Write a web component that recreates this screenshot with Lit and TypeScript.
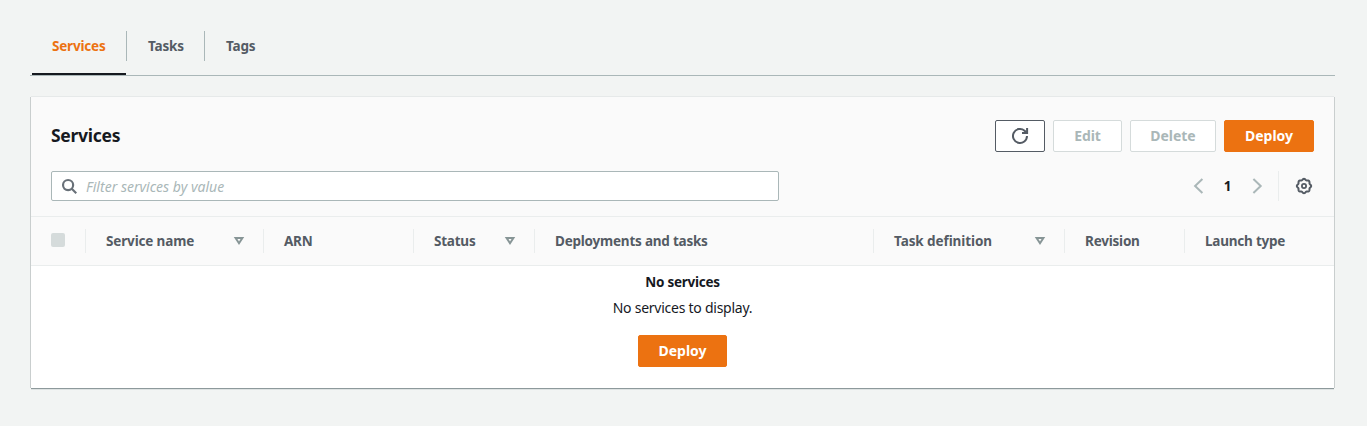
import { LitElement, html, css, svg, nothing } from "lit";
import { customElement } from "lit/decorators.js";

interface Column {
  label: string;
  cls: string;
  sortable?: boolean;
}

const COLUMNS: Column[] = [
  { label: "Service name", cls: "c-name", sortable: true },
  { label: "ARN", cls: "c-arn" },
  { label: "Status", cls: "c-status", sortable: true },
  { label: "Deployments and tasks", cls: "c-deploy" },
  { label: "Task definition", cls: "c-def", sortable: true },
  { label: "Revision", cls: "c-rev" },
  { label: "Launch type", cls: "c-launch" },
];

const gearPath = (() => {
  const pts: string[] = [];
  for (let i = 0; i < 96; i++) {
    const a = (i / 96) * Math.PI * 2;
    const r = 6.6 + 0.55 * Math.cos(a * 8);
    pts.push(`${(8 + r * Math.cos(a)).toFixed(2)} ${(8 + r * Math.sin(a)).toFixed(2)}`);
  }
  return `M${pts.join("L")}Z`;
})();

const icon = (body: unknown) => html`<svg class="icon" viewBox="0 0 16 16" fill="none" stroke="currentColor" stroke-width="2">${body}</svg>`;
const refreshIcon = icon(svg`<path d="M15 8A7 7 0 1 1 12.6 2.7L15 5"/><path d="M15.1 0v5.1h-5.1" />`);
const searchIcon = icon(svg`<circle cx="6.5" cy="6.5" r="5.4" stroke-width="2.3"/><path d="M10.4 10.4L15.2 15.2" stroke-width="2.3"/>`);
const prevIcon = icon(svg`<path d="M12.4 1L5.1 8L12.4 15"/>`);
const nextIcon = icon(svg`<path d="M4.4 1L11.7 8L4.4 15"/>`);
const gearIcon = icon(svg`<path d=${gearPath} stroke-width="2"/><circle cx="8" cy="8" r="2.1" stroke-width="1.8"/>`);
const sortIcon = html`<svg class="sort" viewBox="0 0 10 8" fill="none" stroke="currentColor" stroke-width="2"><path d="M1.6 1H8.4L5 6.2Z"/></svg>`;

@customElement("app-root")
export class AppRoot extends LitElement {
  static styles = css`
    :host {
      display: block;
      box-sizing: border-box;
      height: 426px;
      padding: 16px 32px 0 31px;
      overflow: hidden;
      background: #f2f4f3;
      color: #16191f;
      font: 14px/22px "Noto Sans", "Open Sans", sans-serif;
    }
    * { box-sizing: border-box; }
    .icon { display: block; width: 16px; height: 16px; overflow: visible; flex: none; }
    .tabs {
      display: flex;
      height: 60px;
      margin-left: -1px;
      padding-left: 2px;
      border-bottom: 1px solid #aab7b8;
    }
    .tab {
      display: flex;
      height: 59px;
      padding: 15px 0 14px;
      font-weight: 700;
      font-size: 13.5px;
      color: #545b64;
      white-space: nowrap;
    }
    .tab span { display: block; height: 30px; line-height: 30px; padding-left: 20px; border-right: 1px solid #aab7b8; }
    .tab.active { color: #ec7211; border-bottom: 2px solid #16191f; width: 94px; }
    .tab.active span { width: 95px; flex: none; }
    .tab.tasks span { width: 79px; padding-left: 22px; }
    .tab.tags span { padding-left: 21px; border: 0; }
    .tabs .t { letter-spacing: -0.2px; }
    .panel {
      height: 291px;
      margin-top: 21px;
      width: 1303px;
      background: #fff;
      box-shadow: 0 1px 0 0 #8d999b, -1px 0 0 0 #c9cece, 1px 0 0 0 #c9cece,
        0 -1px 0 0 #e6e9e9, 0 2px 0 0 #dde2e2;
    }
    .head { height: 120px; padding: 23px 20px 0; background: #fafafa; border-bottom: 1px solid #eaeded; }
    .title-row { display: flex; justify-content: space-between; height: 32px; }
    h2 { margin: 0; font-size: 17.5px; line-height: 30px; font-weight: 700; letter-spacing: -0.28px; }
    .actions { display: flex; gap: 8px; }
    .btn {
      display: flex;
      align-items: center;
      justify-content: center;
      height: 32px;
      border: 1px solid #d5dbdb;
      border-radius: 2px;
      background: #fff;
      color: #aab7b8;
      font: 700 14px/20px "Noto Sans", sans-serif;
      letter-spacing: -0.05px;
      padding: 0;
    }
    .refresh { width: 50px; border-color: #545b64; color: #545b64; }
    .edit { width: 69px; }
    .delete { width: 86px; }
    .primary { width: 90px; background: #ec7211; border-color: #ec7211; color: #fff; }
    .tools { display: flex; justify-content: space-between; height: 30px; margin-top: 19px; }
    .search {
      display: flex;
      align-items: center;
      width: 728px;
      height: 30px;
      padding-left: 10px;
      border: 1px solid #aab7b8;
      border-radius: 2px;
      background: #fff;
      color: #687078;
    }
    .search .icon { width: 15px; height: 15px; }
    .placeholder { margin-left: 9px; font-style: italic; color: #aab7b8; letter-spacing: 0.02px; white-space: nowrap; line-height: 28px; padding-top: 1px; }
    .pager { display: flex; align-items: center; color: #aab7b8; }
    .page { width: 43px; text-align: center; color: #16191f; font-weight: 700; font-size: 13.5px; }
    .settings { display: flex; align-items: center; height: 30px; margin-left: 13px; padding: 0 2px 0 17px; border-left: 1px solid #eaeded; color: #545b64; }
    .columns { display: flex; height: 49px; padding: 12px 0; background: #fafafa; border-bottom: 1px solid #eaeded; }
    .col {
      display: flex;
      align-items: center;
      justify-content: space-between;
      height: 24px;
      padding: 0 19px 0 20px;
      border-right: 1px solid #eaeded;
      font-size: 13.5px;
      font-weight: 700;
      color: #545b64;
      white-space: nowrap;
      letter-spacing: -0.22px;
    }
    .sort { display: block; width: 10px; height: 8px; color: #879596; overflow: visible; }
    .c-check { width: 55px; }
    .check { width: 14px; height: 14px; margin-bottom: 2px; border-radius: 2px; background: #d5dbdb; }
    .c-name { width: 178px; letter-spacing: -0.15px; }
    .c-arn { width: 150px; }
    .c-status { width: 121px; }
    .c-deploy { width: 339px; }
    .c-def { width: 191px; letter-spacing: -0.08px; }
    .c-rev { width: 120px; }
    .c-launch { width: 149px; border: 0; }
    .empty { display: flex; flex-direction: column; align-items: center; padding-top: 5px; }
    .empty-title { font-weight: 700; font-size: 13.5px; letter-spacing: -0.25px; }
    .empty-text { margin-top: 4px; letter-spacing: -0.25px; }
    .empty .btn { margin-top: 16px; width: 89px; }
  `;

  render() {
    return html`
      <nav class="tabs">
        <div class="tab active"><span class="t">Services</span></div>
        <div class="tab tasks"><span class="t">Tasks</span></div>
        <div class="tab tags"><span class="t">Tags</span></div>
      </nav>
      <section class="panel">
        <div class="head">
          <div class="title-row">
            <h2>Services</h2>
            <div class="actions">
              <button class="btn refresh" aria-label="Refresh">${refreshIcon}</button>
              <button class="btn edit">Edit</button>
              <button class="btn delete">Delete</button>
              <button class="btn primary">Deploy</button>
            </div>
          </div>
          <div class="tools">
            <div class="search">${searchIcon}<span class="placeholder">Filter services by value</span></div>
            <div class="pager">
              ${prevIcon}<span class="page">1</span>${nextIcon}
              <div class="settings">${gearIcon}</div>
            </div>
          </div>
        </div>
        <div class="columns">
          <div class="col c-check"><span class="check"></span></div>
          ${COLUMNS.map((c) => html`<div class="col ${c.cls}"><span>${c.label}</span>${c.sortable ? sortIcon : nothing}</div>`)}
        </div>
        <div class="empty">
          <div class="empty-title">No services</div>
          <div class="empty-text">No services to display.</div>
          <button class="btn primary">Deploy</button>
        </div>
      </section>
    `;
  }
}
